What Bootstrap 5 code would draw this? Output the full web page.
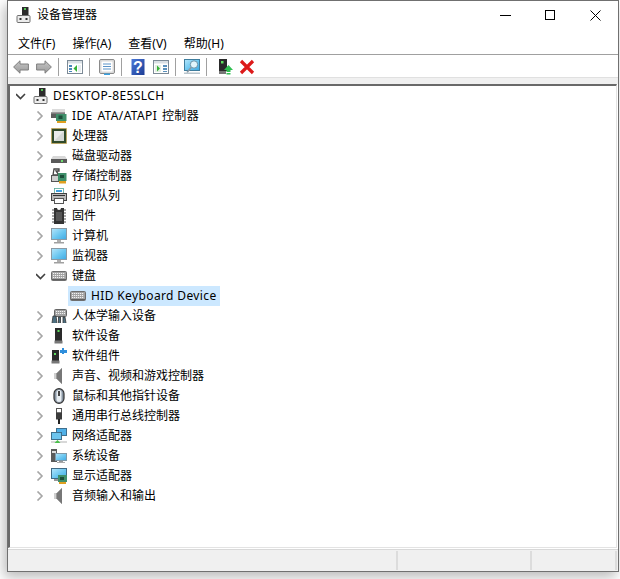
<!DOCTYPE html>
<html lang="zh-CN">
<head>
<meta charset="utf-8">
<title>设备管理器</title>
<link href="https://cdn.jsdelivr.net/npm/bootstrap@5.3.0/dist/css/bootstrap.min.css" rel="stylesheet">
<style>
html,body{margin:0;background:#fff;height:579px;overflow:hidden}
body{font:12px/16px "Noto Sans","Noto Sans CJK SC",sans-serif;color:#000}
.dm-win{margin-left:7px;width:612px;height:572px;border:1px solid #707070;background:#fff;box-shadow:-3px 5px 12px rgba(0,0,0,.28)}
.dm-title{height:30px;padding:0 0 2px 8px}
.dm-title .dm-ttl{margin-left:5px}
.dm-ctl{margin-left:auto;padding-right:17px;gap:34px}
.dm-menu{height:24px;padding:2px 0 0 10px;border-bottom:1px solid #a0a0a0;gap:17px}
.dm-tool{height:22px;padding:2px 0 0 5px}
.dm-sep{width:1px;height:18px;background:#a0a0a0}
.ml6{margin-left:6px}.ml7{margin-left:7px}.ml8{margin-left:8px}.ml9{margin-left:9px}.ml10{margin-left:10px}
.dm-band{height:7px;background:#f0f0f0;border-top:1px solid #e0e0e0}
.dm-tree{height:464px;border-top:2px solid #696969;border-left:2px solid #696969;border-right:1px solid #e3e3e3;border-bottom:1px solid #e3e3e3;margin:0 1px 0 0;overflow:hidden}
.dm-gap{height:1px}
.dm-status{height:22px;background:#f0f0f0;border-top:1px solid #d8d8d8}
.dm-cell{height:19px;margin-top:1px;border-right:2px solid #dcdcdc}
.dm-c1{width:390px}.dm-c2{width:133.5px}.dm-c3{width:85px}
.dm-node{height:20px;white-space:nowrap}
.dm-root{padding-left:6px}
.dm-l1{padding-left:26px}
.dm-chev{width:10px;height:10px;flex:none}
.dm-ico{width:16px;height:16px;flex:none}
.dm-root .dm-ico{margin:0 4px 0 7px}
.dm-l1 .dm-ico{margin:0 5px 0 5px}
.dm-sel{margin-left:58px;width:152px;padding-left:2px;background:#cce8ff}
.dm-sel .dm-ico{margin-right:5px}
.dm-lat{letter-spacing:.37px}
.dm-wide{word-spacing:1.3px}
</style>
</head>
<body>
<svg width="0" height="0" class="d-block position-absolute">
<defs>
<linearGradient id="g-scr" x1="0" y1="0" x2="1" y2="1"><stop offset="0" stop-color="#b5e6fb"/><stop offset=".55" stop-color="#6ac6f0"/><stop offset="1" stop-color="#3fa9e3"/></linearGradient>
<linearGradient id="g-arr" x1="0" y1="0" x2="0" y2="1"><stop offset="0" stop-color="#c6c6c6"/><stop offset="1" stop-color="#9a9a9a"/></linearGradient>
<linearGradient id="g-hlp" x1="0" y1="0" x2="1" y2="1"><stop offset="0" stop-color="#4a78d8"/><stop offset="1" stop-color="#1c3c94"/></linearGradient>
<symbol id="i-chr" viewBox="0 0 10 10"><path d="M1.500 .5 6 5 1.500 9.500" fill="none" stroke="#a6a6a6" stroke-width="1.600"/></symbol>
<symbol id="i-chd" viewBox="0 0 10 10"><path d="M0 3 4.500 7.500 9 3" fill="none" stroke="#404040" stroke-width="1.600"/></symbol>
<symbol id="i-dm" viewBox="0 0 16 16"><rect x="6" y="0" width="6.500" height="8.500" fill="#2c2c2c"/><rect x="8" y="1" width="2" height="2" fill="#54c254"/><rect x="1" y="8.500" width="13" height="7" rx="1" fill="#ececec" stroke="#707070"/><rect x="3.500" y="11" width="2" height="2" fill="#333"/><rect x="9.500" y="11" width="2" height="2" fill="#333"/></symbol>
<symbol id="i-ide" viewBox="0 0 16 16"><rect x="1" y="1" width="13" height="4" fill="#dcdcdc"/><rect x="0" y="4" width="14" height="6" fill="#5c5c5c"/><rect x="0" y="4" width="14" height="1.500" fill="#9c9c9c"/><rect x="5" y="6" width="10.500" height="7" fill="#3f8f6a"/><rect x="7.500" y="7.500" width="4" height="3.500" fill="#1d4f3a"/><rect x="6" y="13" width="9" height="2" fill="#e0a020"/></symbol>
<symbol id="i-cpu" viewBox="0 0 16 16"><rect x=".5" y=".5" width="15" height="15" fill="#354f2a" stroke="#d9a73a" stroke-dasharray="1 1"/><rect x="1.500" y="1.500" width="13" height="13" fill="#2f4a2a"/><rect x="3" y="3" width="10" height="10" fill="#d4d8d4"/><path d="M3 3h10L3 13z" fill="#e9ebe9"/></symbol>
<symbol id="i-disk" viewBox="0 0 16 16"><path d="M2 8h12l2 3H0z" fill="#d8d8d8"/><rect x="0" y="11" width="16" height="4" fill="#5a5a5a"/><rect x="10" y="12" width="2" height="2" fill="#6fdc6f"/></symbol>
<symbol id="i-stor" viewBox="0 0 16 16"><path d="M3 1h5v2H5l3 4H2z" fill="none" stroke="#444" stroke-width="1.300"/><rect x=".5" y="7.500" width="11" height="6" fill="#cfcfcf" stroke="#555"/><rect x="7" y="5" width="8.500" height="8" fill="#3f8f6a"/><rect x="9" y="7" width="4" height="3" fill="#1d4f3a"/><rect x="8" y="13" width="7" height="2.500" fill="#e0a020"/></symbol>
<symbol id="i-prn" viewBox="0 0 16 16"><rect x="3.500" y=".5" width="9" height="5" fill="#fff" stroke="#5a9" stroke-width=".8"/><rect x="5" y="2" width="6" height="2" fill="#3f9fe0"/><rect x=".5" y="5.500" width="15" height="7" fill="#b8b8b8" stroke="#444"/><rect x="2" y="7" width="12" height="1" fill="#333"/><rect x="3.500" y="10.500" width="9" height="5" fill="#fff" stroke="#555"/></symbol>
<symbol id="i-chip" viewBox="0 0 16 16"><rect x="3" y="0" width="10" height="16" fill="#333"/><path d="M6 0a2 2 0 0 0 4 0z" fill="#fff"/><path d="M1 2h2M1 5h2M1 8h2M1 11h2M1 14h2M13 2h2M13 5h2M13 8h2M13 11h2M13 14h2" stroke="#8a8a8a" stroke-width="1.300"/><rect x="5" y="4" width="6" height="9" fill="#555"/></symbol>
<symbol id="i-mon" viewBox="0 0 16 16"><rect x=".5" y=".5" width="15" height="11" fill="url(#g-scr)" stroke="#8a9aa5"/><rect x="6" y="12" width="4" height="2" fill="#b0b0b0"/><rect x="3" y="14" width="10" height="1.500" fill="#a0a0a0"/></symbol>
<symbol id="i-kbd" viewBox="0 0 16 16"><rect x=".5" y="3.500" width="15" height="9" rx="1" fill="#a2a2a2" stroke="#6e6e6e"/><path d="M2 5.500h12M2 7.500h12M2 9.500h12" stroke="#f2f2f2" stroke-dasharray="1.200 .8"/><rect x="1" y="11" width="14" height="1" fill="#5f5f5f"/></symbol>
<symbol id="i-hid" viewBox="0 0 16 16"><rect x="3.500" y="1.500" width="12" height="7" rx="1" fill="#a2a2a2" stroke="#666"/><path d="M5 3.500h9M5 5.500h9" stroke="#f2f2f2" stroke-dasharray="1.200 .8"/><path d="M1 15l1-7h3l1 7M7.500 15V9h2v6M12 15V9h2l1 6" fill="#4d6f80" stroke="#333" stroke-width=".8"/></symbol>
<symbol id="i-sw" viewBox="0 0 16 16"><rect x="4" y="0" width="7" height="13" fill="#2a2a2a"/><rect x="6.500" y="2" width="2" height="2" fill="#5ee05e"/><rect x="3.500" y="12.500" width="8" height="3" fill="#777"/></symbol>
<symbol id="i-swc" viewBox="0 0 16 16"><rect x="1" y="2" width="7" height="11" fill="#2a2a2a"/><rect x="3" y="5" width="2" height="2" fill="#5ee05e"/><rect x=".5" y="12.500" width="8" height="3" fill="#777"/><path d="M11 0h2v2h3v3h-3v1h-2V5H9V2h2z" fill="#2f8fdc"/></symbol>
<symbol id="i-spk" viewBox="0 0 16 16"><path d="M3 5h3l5-5v16l-5-5H3z" fill="#9a9a9a"/><path d="M6 5l5-5v16l-5-5z" fill="#777"/><rect x="3" y="5" width="2" height="6" fill="#d0d0d0"/></symbol>
<symbol id="i-mouse" viewBox="0 0 16 16"><rect x="3" y=".7" width="10" height="14.600" rx="5" fill="#8a97a5" stroke="#333" stroke-width="1.200"/><rect x="5.500" y="2" width="5" height="12" rx="2.500" fill="#e8eef2"/><rect x="7" y="3" width="2" height="5" fill="#444"/></symbol>
<symbol id="i-usb" viewBox="0 0 16 16"><rect x="5.500" y=".5" width="5" height="4.500" fill="#fff" stroke="#555"/><rect x="5" y="4.500" width="6" height="7" fill="#3c3c3c"/><rect x="7" y="11" width="2" height="5" fill="#222"/></symbol>
<symbol id="i-net" viewBox="0 0 16 16"><rect x="5.500" y=".5" width="10" height="7" fill="#4fb0e8" stroke="#3f6f8d"/><rect x=".5" y="4.500" width="10" height="7" fill="#6cc4ee" stroke="#3f6f8d"/><rect x="0" y="13" width="16" height="2" fill="#d8d8d8"/><path d="M3.500 15l3-3 3 3z" fill="#4ac04a"/></symbol>
<symbol id="i-sys" viewBox="0 0 16 16"><rect x="0" y="1" width="6" height="13" fill="#5a5a5a"/><rect x="1" y="3" width="4" height="2" fill="#ddd"/><rect x="4.500" y="5.500" width="11" height="7" fill="url(#g-scr)" stroke="#7f99a8"/><rect x="8" y="13" width="4" height="1" fill="#999"/><rect x="6" y="14" width="8" height="1" fill="#aaa"/></symbol>
<symbol id="i-dsp" viewBox="0 0 16 16"><rect x=".5" y=".5" width="15" height="10" fill="url(#g-scr)" stroke="#3f6a85"/><rect x="3" y="11" width="4" height="2" fill="#999"/><rect x="7" y="7" width="9" height="7" fill="#3f8f6a"/><rect x="9" y="9" width="4" height="3" fill="#1d4f3a"/><rect x="8" y="14" width="7" height="2" fill="#e0a020"/></symbol>
<symbol id="t-back" viewBox="0 0 16 16"><path d="M.6 8 7 1.800V5h8.400v6H7v3.200z" fill="url(#g-arr)" stroke="#7e7e7e"/></symbol>
<symbol id="t-fwd" viewBox="0 0 16 16"><path d="M15.400 8 9 1.800V5H.6v6H9v3.200z" fill="url(#g-arr)" stroke="#7e7e7e"/></symbol>
<symbol id="t-v1" viewBox="0 0 16 16"><rect x=".5" y="1.500" width="15" height="13" fill="#fff" stroke="#7c8a96"/><rect x="1" y="2" width="14" height="2.500" fill="#d9dfe4"/><path d="M2 6h3v2H2zm0 3h3v2H2zm0 3h3v1H2z" fill="#4a86b8"/><path d="M10 6v7L6.500 9.500z" fill="#35b035"/><path d="M11 6h3v7h-3z" fill="#e8edf0"/></symbol>
<symbol id="t-v2" viewBox="0 0 16 16"><rect x=".5" y="1.500" width="15" height="13" fill="#fff" stroke="#7c8a96"/><rect x="1" y="2" width="14" height="2.500" fill="#d9dfe4"/><path d="M2 6h6v7H2z" fill="#e4efe4"/><path d="M4 6.500v6l3-3z" fill="#35b035"/><path d="M10 6h4v2h-4zm0 3h4v2h-4zm0 3h4v1h-4z" fill="#5a90bc"/></symbol>
<symbol id="t-prop" viewBox="0 0 16 16"><rect x=".5" y=".5" width="15" height="14" rx="1.500" fill="#e6e6e6" stroke="#8a8a8a"/><rect x="2" y="2" width="12" height="11" fill="#fff" stroke="#b5b5b5" stroke-width=".5"/><path d="M4 5h8M4 7.500h8M4 10h8" stroke="#5a93c8"/><rect x="5" y="14.500" width="6" height="1.500" fill="#39a0e0"/></symbol>
<symbol id="t-help" viewBox="0 0 16 16"><rect x="1.500" y="0" width="13" height="16" fill="url(#g-hlp)"/><text x="8" y="14" text-anchor="middle" font-size="16" font-weight="700" font-family="Liberation Sans,sans-serif" fill="#fff">?</text></symbol>
<symbol id="t-scan" viewBox="0 0 16 16"><rect x=".5" y=".5" width="15" height="11" fill="url(#g-scr)" stroke="#3f7d9d"/><circle cx="10" cy="5.500" r="3.700" fill="#e2f5fc" stroke="#6b93a8"/><path d="M7.300 8.200 3 13.500" stroke="#8a9aa5" stroke-width="1.600"/><rect x="0" y="13.500" width="16" height="1.500" fill="#b8c4cc"/></symbol>
<symbol id="t-upd" viewBox="0 0 16 16"><rect x="2" y="0" width="8" height="12" fill="#2a2a2a"/><rect x="4" y="2" width="2.500" height="2.500" fill="#5ee05e"/><rect x="2" y="12" width="7" height="3" fill="#777"/><path d="M11.500 6 16 11h-2.500v2H9.500v-2H7z" fill="#2fbf50"/><rect x="9.500" y="14" width="4" height="1.500" fill="#2fbf50"/></symbol>
<symbol id="t-del" viewBox="0 0 16 16"><path d="M2 2 14 14M14 2 2 14" stroke="#dc1a1a" stroke-width="3.200"/></symbol>
</defs>
</svg>

<div class="dm-win d-flex flex-column">
  <div class="dm-title d-flex align-items-center">
    <svg class="dm-ico"><use href="#i-dm"/></svg>
    <span class="dm-ttl">设备管理器</span>
    <div class="dm-ctl d-flex align-items-center">
      <svg width="11" height="11" viewBox="0 0 11 11"><path d="M0 5.500h11" stroke="#000"/></svg>
      <svg width="11" height="11" viewBox="0 0 11 11"><rect x=".5" y=".5" width="9" height="9" fill="none" stroke="#000"/></svg>
      <svg width="11" height="11" viewBox="0 0 11 11"><path d="M.5 .5l10 10M10.500 .5l-10 10" stroke="#000" fill="none"/></svg>
    </div>
  </div>
  <div class="dm-menu d-flex align-items-center">
    <span>文件(F)</span><span>操作(A)</span><span>查看(V)</span><span>帮助(H)</span>
  </div>
  <div class="dm-tool d-flex align-items-center">
    <svg class="dm-ico"><use href="#t-back"/></svg>
    <svg class="dm-ico ml7"><use href="#t-fwd"/></svg>
    <span class="dm-sep ml6"></span>
    <svg class="dm-ico ml8"><use href="#t-v1"/></svg>
    <span class="dm-sep ml6"></span>
    <svg class="dm-ico ml9"><use href="#t-prop"/></svg>
    <span class="dm-sep ml6"></span>
    <svg class="dm-ico ml8"><use href="#t-help"/></svg>
    <svg class="dm-ico ml7"><use href="#t-v2"/></svg>
    <span class="dm-sep ml6"></span>
    <svg class="dm-ico ml8"><use href="#t-scan"/></svg>
    <span class="dm-sep ml6"></span>
    <svg class="dm-ico ml10"><use href="#t-upd"/></svg>
    <svg class="dm-ico ml6"><use href="#t-del"/></svg>
  </div>
  <div class="dm-band"></div>
  <ul class="dm-tree list-unstyled mb-0">
    <li class="dm-node dm-root d-flex align-items-center"><svg class="dm-chev"><use href="#i-chd"/></svg><svg class="dm-ico"><use href="#i-dm"/></svg><span class="dm-lat">DESKTOP-8E5SLCH</span></li>
    <li class="dm-node dm-l1 d-flex align-items-center"><svg class="dm-chev"><use href="#i-chr"/></svg><svg class="dm-ico"><use href="#i-ide"/></svg><span class="dm-lat dm-wide">IDE ATA/ATAPI 控制器</span></li>
    <li class="dm-node dm-l1 d-flex align-items-center"><svg class="dm-chev"><use href="#i-chr"/></svg><svg class="dm-ico"><use href="#i-cpu"/></svg><span>处理器</span></li>
    <li class="dm-node dm-l1 d-flex align-items-center"><svg class="dm-chev"><use href="#i-chr"/></svg><svg class="dm-ico"><use href="#i-disk"/></svg><span>磁盘驱动器</span></li>
    <li class="dm-node dm-l1 d-flex align-items-center"><svg class="dm-chev"><use href="#i-chr"/></svg><svg class="dm-ico"><use href="#i-stor"/></svg><span>存储控制器</span></li>
    <li class="dm-node dm-l1 d-flex align-items-center"><svg class="dm-chev"><use href="#i-chr"/></svg><svg class="dm-ico"><use href="#i-prn"/></svg><span>打印队列</span></li>
    <li class="dm-node dm-l1 d-flex align-items-center"><svg class="dm-chev"><use href="#i-chr"/></svg><svg class="dm-ico"><use href="#i-chip"/></svg><span>固件</span></li>
    <li class="dm-node dm-l1 d-flex align-items-center"><svg class="dm-chev"><use href="#i-chr"/></svg><svg class="dm-ico"><use href="#i-mon"/></svg><span>计算机</span></li>
    <li class="dm-node dm-l1 d-flex align-items-center"><svg class="dm-chev"><use href="#i-chr"/></svg><svg class="dm-ico"><use href="#i-mon"/></svg><span>监视器</span></li>
    <li class="dm-node dm-l1 d-flex align-items-center"><svg class="dm-chev"><use href="#i-chd"/></svg><svg class="dm-ico"><use href="#i-kbd"/></svg><span>键盘</span></li>
    <li class="dm-node dm-sel d-flex align-items-center"><svg class="dm-ico"><use href="#i-kbd"/></svg><span class="dm-lat">HID Keyboard Device</span></li>
    <li class="dm-node dm-l1 d-flex align-items-center"><svg class="dm-chev"><use href="#i-chr"/></svg><svg class="dm-ico"><use href="#i-hid"/></svg><span>人体学输入设备</span></li>
    <li class="dm-node dm-l1 d-flex align-items-center"><svg class="dm-chev"><use href="#i-chr"/></svg><svg class="dm-ico"><use href="#i-sw"/></svg><span>软件设备</span></li>
    <li class="dm-node dm-l1 d-flex align-items-center"><svg class="dm-chev"><use href="#i-chr"/></svg><svg class="dm-ico"><use href="#i-swc"/></svg><span>软件组件</span></li>
    <li class="dm-node dm-l1 d-flex align-items-center"><svg class="dm-chev"><use href="#i-chr"/></svg><svg class="dm-ico"><use href="#i-spk"/></svg><span>声音、视频和游戏控制器</span></li>
    <li class="dm-node dm-l1 d-flex align-items-center"><svg class="dm-chev"><use href="#i-chr"/></svg><svg class="dm-ico"><use href="#i-mouse"/></svg><span>鼠标和其他指针设备</span></li>
    <li class="dm-node dm-l1 d-flex align-items-center"><svg class="dm-chev"><use href="#i-chr"/></svg><svg class="dm-ico"><use href="#i-usb"/></svg><span>通用串行总线控制器</span></li>
    <li class="dm-node dm-l1 d-flex align-items-center"><svg class="dm-chev"><use href="#i-chr"/></svg><svg class="dm-ico"><use href="#i-net"/></svg><span>网络适配器</span></li>
    <li class="dm-node dm-l1 d-flex align-items-center"><svg class="dm-chev"><use href="#i-chr"/></svg><svg class="dm-ico"><use href="#i-sys"/></svg><span>系统设备</span></li>
    <li class="dm-node dm-l1 d-flex align-items-center"><svg class="dm-chev"><use href="#i-chr"/></svg><svg class="dm-ico"><use href="#i-dsp"/></svg><span>显示适配器</span></li>
    <li class="dm-node dm-l1 d-flex align-items-center"><svg class="dm-chev"><use href="#i-chr"/></svg><svg class="dm-ico"><use href="#i-spk"/></svg><span>音频输入和输出</span></li>
  </ul>
  <div class="dm-gap"></div>
  <div class="dm-status d-flex">
    <div class="dm-cell dm-c1"></div>
    <div class="dm-cell dm-c2"></div>
    <div class="dm-cell dm-c3"></div>
  </div>
</div>
</body>
</html>
